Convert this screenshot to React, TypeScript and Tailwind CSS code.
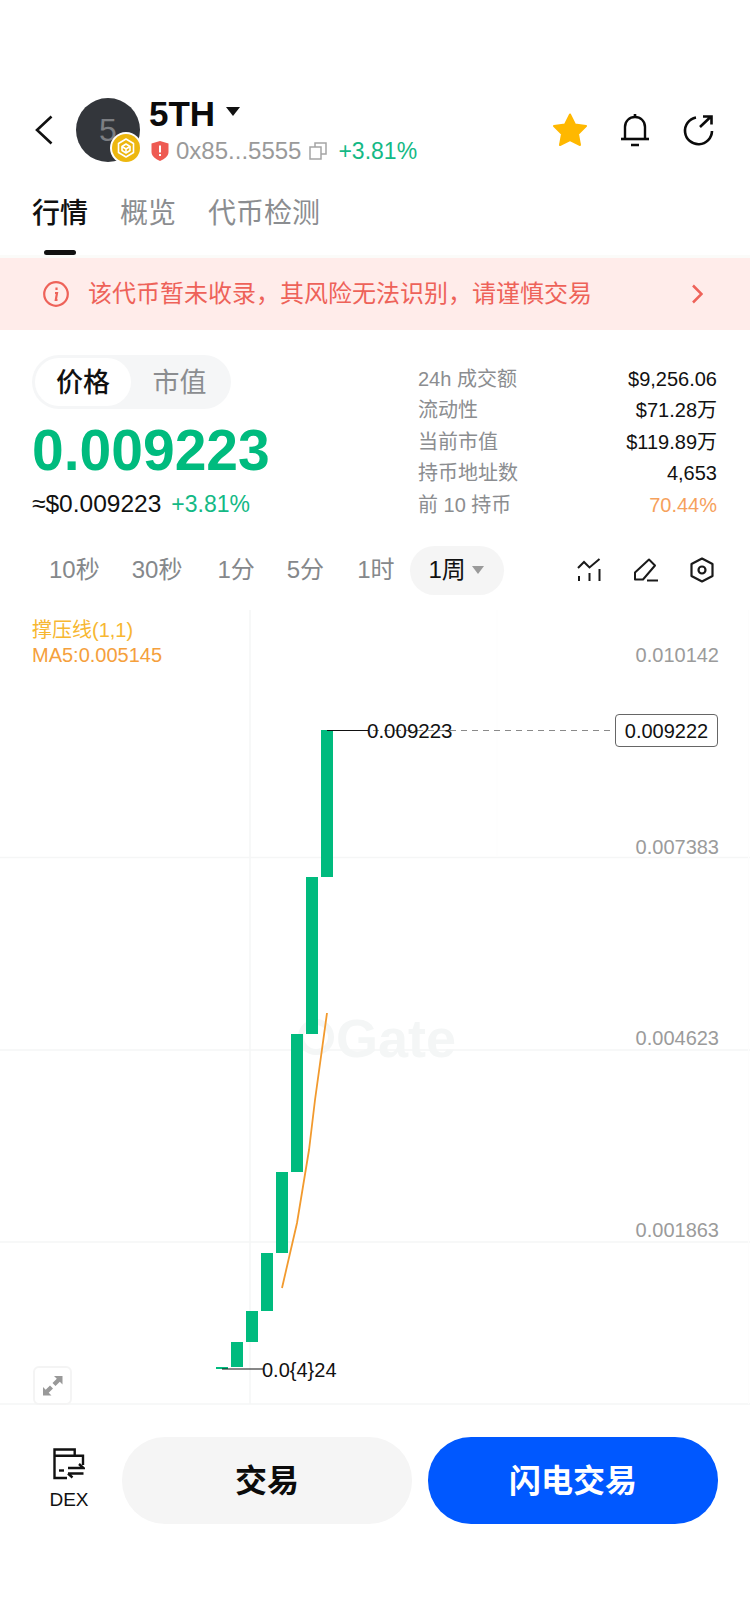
const baseFont = "font-['Liberation_Sans','Noto_Sans_CJK_SC',sans-serif]"

const stats = [
  { label: "24h 成交额", value: "$9,256.06", color: "text-[#111]" },
  { label: "流动性", value: "$71.28万", color: "text-[#111]" },
  { label: "当前市值", value: "$119.89万", color: "text-[#111]" },
  { label: "持币地址数", value: "4,653", color: "text-[#111]" },
  { label: "前 10 持币", value: "70.44%", color: "text-[#f6a15c]" },
]

const candles = [
  { x: 321, y: 730, h: 147 },
  { x: 306, y: 877, h: 157 },
  { x: 291, y: 1034, h: 138 },
  { x: 276, y: 1172, h: 81 },
  { x: 261, y: 1253, h: 58 },
  { x: 246, y: 1311, h: 31 },
  { x: 231, y: 1342, h: 25 },
  { x: 216, y: 1367, h: 2 },
]

const axis = [
  { label: "0.010142", y: 45 },
  { label: "0.007383", y: 237 },
  { label: "0.004623", y: 428 },
  { label: "0.001863", y: 620 },
]

// chart box starts at y=610 on the page, so candle coords are shifted by it
function ChartDrawing() {
  return (
    <svg width="750" height="795" viewBox="0 610 750 795" className="absolute inset-0">
      <g stroke="#f5f6f6" strokeWidth="1.5" fill="none">
        <path d="M0 857.5H750M0 1050H750M0 1242H750M0 1404H750M250 610V1404" />
      </g>
      <path d="M497 610V857M748.5 610V1404" stroke="#fdfdfd" strokeWidth="1" />
      <circle cx="316" cy="1037" r="15" fill="none" stroke="#f4f6f6" strokeWidth="6" />
      {candles.map((c) => (
        <rect key={c.x} x={c.x} y={c.y} width="12" height={c.h} fill="#00bb7e" />
      ))}
      <path
        d="M282 1288L297 1223L309 1150L315 1100L327 1013"
        stroke="#f29a2e"
        strokeWidth="1.8"
        fill="none"
      />
      <path d="M340 730.500H612" stroke="#8a8a8a" strokeWidth="1.2" strokeDasharray="6 5" />
      <path d="M327 730.500H368" stroke="#111" strokeWidth="1.2" />
      <path d="M222 1369H263" stroke="#111" strokeWidth="1.2" />
    </svg>
  )
}

export default function App() {
  return (
    <div className={`w-[750px] h-[1624px] bg-white flex flex-col overflow-hidden ${baseFont}`}>
      <header className="h-[179px] pt-[98px] pl-[35px] pr-[36px] flex items-start">
        <svg width="18" height="30" viewBox="0 0 18 30" className="mt-[17px] shrink-0" fill="none" stroke="#111" strokeWidth="2.6">
          <path d="M16.500 1.500L2 15L16.500 28.500" />
        </svg>
        <div className="relative w-[64px] h-[64px] rounded-full bg-[#33363b] ml-[23px] flex items-center justify-center text-[#7c7e82] text-[32px] shrink-0">
          5
          <div className="absolute left-[34px] top-[34px] w-[32px] h-[32px] rounded-full bg-white flex items-center justify-center">
            <svg width="28" height="28" viewBox="0 0 28 28">
              <circle cx="14" cy="14" r="14" fill="#edb70f" />
              <g fill="none" stroke="#fff" strokeWidth="1.6" strokeLinejoin="round">
                <path d="M14 5L21.500 9.500V18.500L14 23L6.500 18.500V9.500Z" />
                <path d="M14 10L18 12.500V16.500L14 19L10 16.500V12.500Z" />
                <path d="M10 12.500L14 15L18 12.500M14 15V19" />
              </g>
            </svg>
          </div>
        </div>
        <div className="ml-[9px] flex flex-col">
          <div className="flex items-center h-[34px] mt-[-2px]">
            <span className="text-[35px] font-bold text-[#0b0b0b] leading-none">5TH</span>
            <svg width="14" height="9" viewBox="0 0 14 9" className="ml-[11px] mt-[-3px]">
              <path d="M0 0H14L7 9Z" fill="#111" />
            </svg>
          </div>
          <div className="flex items-center mt-[7px] h-[28px]">
            <svg width="18" height="20" viewBox="0 0 18 20" className="ml-[2px]">
              <path d="M9 0L17.500 2.500V11C17.500 15 13 18.500 9 20C5 18.500 .5 15 .5 11V2.500Z" fill="#ee5a52" />
              <rect x="8" y="4.500" width="2" height="7" fill="#fff" />
              <rect x="8" y="13" width="2" height="2" fill="#fff" />
            </svg>
            <span className="ml-[7px] text-[24px] text-[#9a9a9a] leading-none">0x85...5555</span>
            <svg width="18" height="18" viewBox="0 0 18 18" className="ml-[8px]" fill="none" stroke="#a5a5a5" strokeWidth="1.5">
              <rect x="1" y="5" width="11" height="12" />
              <path d="M6 5V1H17V12H12" />
            </svg>
            <span className="ml-[11px] text-[23px] text-[#14b985] leading-none">+3.81%</span>
          </div>
        </div>
        <div className="ml-auto flex items-center gap-[32px] mt-[15px]">
          <svg width="36" height="34" viewBox="0 0 36 34">
            <path
              d="M18 1.500L23 11.500L34 13L26 21L28 32L18 27L8 32L10 21L2 13L13 11.500Z"
              fill="#ffb800"
              stroke="#ffb800"
              strokeWidth="2"
              strokeLinejoin="round"
            />
          </svg>
          <svg width="30" height="34" viewBox="0 0 30 34" fill="none" stroke="#0b0b0b" strokeWidth="2.400">
            <path d="M5 25V14C5 8 9.500 4 15 4C20.500 4 25 8 25 14V25" />
            <path d="M1 26H29" strokeWidth="2.600" />
            <path d="M15 1V4M11 32H19" strokeWidth="2.600" />
          </svg>
          <svg width="32" height="32" viewBox="0 0 32 32" fill="none" stroke="#0b0b0b" strokeWidth="2.600">
            <path d="M14 3.500A13.500 13.500 0 1 0 30 17" />
            <path d="M18 13L29 2.500M21 2.500H29.500V10.500" />
          </svg>
        </div>
      </header>

      <nav className="h-[76px] pl-[32px] pt-[14px] flex items-start gap-[32px] text-[28px] leading-[42px] text-[#8b8d90] relative">
        <div className="relative text-[#111] font-medium">
          行情
          <div className="absolute left-[12px] top-[57px] w-[32px] h-[5px] rounded-full bg-[#111]" />
        </div>
        <span>概览</span>
        <span>代币检测</span>
      </nav>

      <div className="h-[3px] bg-[#fbfbf9]" />
      <div className="h-[72px] bg-[#ffecea] flex items-center pl-[43px] pr-[47px] text-[#ee6259] shrink-0">
        <svg width="26" height="26" viewBox="0 0 26 26" fill="none" stroke="#ee6259" strokeWidth="2.200">
          <circle cx="13" cy="13" r="11.800" />
          <path d="M13.500 6.500V9M12 12H14L12.800 19H14.500" />
        </svg>
        <span className="ml-[19px] text-[24px] leading-none">该代币暂未收录，其风险无法识别，请谨慎交易</span>
        <svg width="12" height="20" viewBox="0 0 12 20" className="ml-auto" fill="none" stroke="#ee6259" strokeWidth="2.500">
          <path d="M2 1.500L10.500 10L2 18.500" />
        </svg>
      </div>

      <section className="h-[200px] pl-[32px] pr-[33px] flex justify-between">
        <div className="flex flex-col">
          <div className="mt-[25px] w-[199px] h-[54px] rounded-[27px] bg-[#f5f6f7] flex items-center p-[3px] text-[27px]">
            <div className="w-[96px] h-[48px] pt-[2px] rounded-[24px] bg-white flex items-center justify-center font-medium text-[#111]">价格</div>
            <div className="flex-1 pt-[2px] text-center text-[#8b8d90]">市值</div>
          </div>
          <div className="mt-[11px] text-[57px] font-bold text-[#00bb7e] leading-[60px]">0.009223</div>
          <div className="flex items-center mt-[9px] leading-[30px]">
            <span className="text-[24.500px] text-[#111]">≈$0.009223</span>
            <span className="ml-[10px] text-[23px] text-[#14b985]">+3.81%</span>
          </div>
        </div>
        <div className="w-[299px] pt-[33px] flex flex-col text-[20px]">
          {stats.map((s) => (
            <div key={s.label} className="h-[31.500px] flex items-center justify-between">
              <span className="text-[#8b8d90]">{s.label}</span>
              <span className={s.color}>{s.value}</span>
            </div>
          ))}
        </div>
      </section>

      <div className="h-[80px] pl-[49px] pr-[36px] flex items-center text-[24px] text-[#85888b]">
        <span>10秒</span>
        <span className="ml-[32px]">30秒</span>
        <span className="ml-[35px]">1分</span>
        <span className="ml-[32px]">5分</span>
        <span className="ml-[33px]">1时</span>
        <div className="ml-[16px] w-[94px] h-[49px] rounded-[25px] bg-[#f5f5f5] flex items-center pl-[18px] text-[#111]">
          1周
          <svg width="12" height="8" viewBox="0 0 12 8" className="ml-[6px]">
            <path d="M0 0H12L6 8Z" fill="#9a9a9a" />
          </svg>
        </div>
        <div className="ml-auto flex items-center gap-[32px]">
          <svg width="24" height="24" viewBox="0 0 24 24" fill="none" stroke="#1a1a1a" strokeWidth="2">
            <path d="M1 10L7 4L12.500 9.500L22.500 1" />
            <path d="M2 18V23M12.500 15V23M22.500 11V23" />
          </svg>
          <svg width="25" height="24" viewBox="0 0 25 24" fill="none" stroke="#1a1a1a" strokeWidth="2" strokeLinejoin="round">
            <path d="M16 1.500L22 7.500L10 21.500H2V14.500Z" />
            <path d="M14 22.500H25" />
          </svg>
          <svg width="24" height="26" viewBox="0 0 24 26" fill="none" stroke="#1a1a1a" strokeWidth="2.200">
            <path d="M12 1.500L22.500 7V19L12 24.500L1.500 19V7Z" strokeLinejoin="round" />
            <circle cx="12" cy="13" r="3.500" />
          </svg>
        </div>
      </div>

      <section className="relative h-[795px] shrink-0">
        <ChartDrawing />
        <div className="absolute left-[336px] top-[400px] text-[54px] font-bold leading-[56px] text-[#f4f6f6]">Gate</div>
        <div className="absolute left-[32px] top-[8px] text-[20px] leading-[25px]">
          <div className="text-[#f7b731]">撑压线(1,1)</div>
          <div className="text-[#f5a03c]">MA5:0.005145</div>
        </div>
        {axis.map((a) => (
          <span key={a.label} style={{ top: a.y - 13 }} className="absolute right-[31px] text-[20px] leading-[26px] text-[#9b9b9b]">
            {a.label}
          </span>
        ))}
        <span className="absolute left-[367px] top-[108px] text-[20.500px] leading-[26px] text-[#111]">0.009223</span>
        <span className="absolute left-[262px] top-[747px] text-[20px] leading-[26px] text-[#111]">0.0{"{4}"}24</span>
        <div className="absolute left-[615px] top-[104px] w-[103px] h-[33px] border border-[#666] rounded-[4px] bg-white flex items-center justify-center text-[20px] text-[#111]">
          0.009222
        </div>
        <div className="absolute left-[33px] top-[756px] w-[39px] h-[39px] border-2 border-[#f4f4f4] rounded-[6px] flex items-center justify-center">
          <svg width="20" height="20" viewBox="0 0 20 20" fill="#999">
            <path d="M11 0H19.500V8.500L16.800 5.800L12.500 10L9.500 7L13.800 2.700Z" />
            <path d="M8.500 19.500H0V11L2.700 13.700L7 9.500L10 12.500L5.700 16.800Z" />
          </svg>
        </div>
      </section>

      <footer className="pl-[33px] pr-[32px] pt-[32px] flex items-start">
        <div className="w-[67px] shrink-0 flex flex-col items-center mt-[11px]">
          <svg width="32" height="32" viewBox="0 0 32 32" fill="none" stroke="#111" strokeWidth="2.400" className="ml-[5px]">
            <path d="M14 30H1.500V1.500H21.700V7.700H30V17M1.500 7.700H21.700" />
            <path d="M6 22.500H11" />
            <path d="M15 20H30.500L26 16M15 25.500H30.500M15 25.500L19.500 29.500" />
          </svg>
          <span className="mt-[8px] ml-[5px] text-[19px] leading-[24px] text-[#111]">DEX</span>
        </div>
        <button className="ml-[22px] w-[290px] h-[87px] rounded-[43px] bg-[#f5f5f5] text-[32px] font-bold text-[#0b0b0b]">交易</button>
        <button className="ml-[16px] w-[290px] h-[87px] rounded-[43px] bg-[#0058ff] text-[32px] font-semibold text-white">闪电交易</button>
      </footer>
    </div>
  )
}
